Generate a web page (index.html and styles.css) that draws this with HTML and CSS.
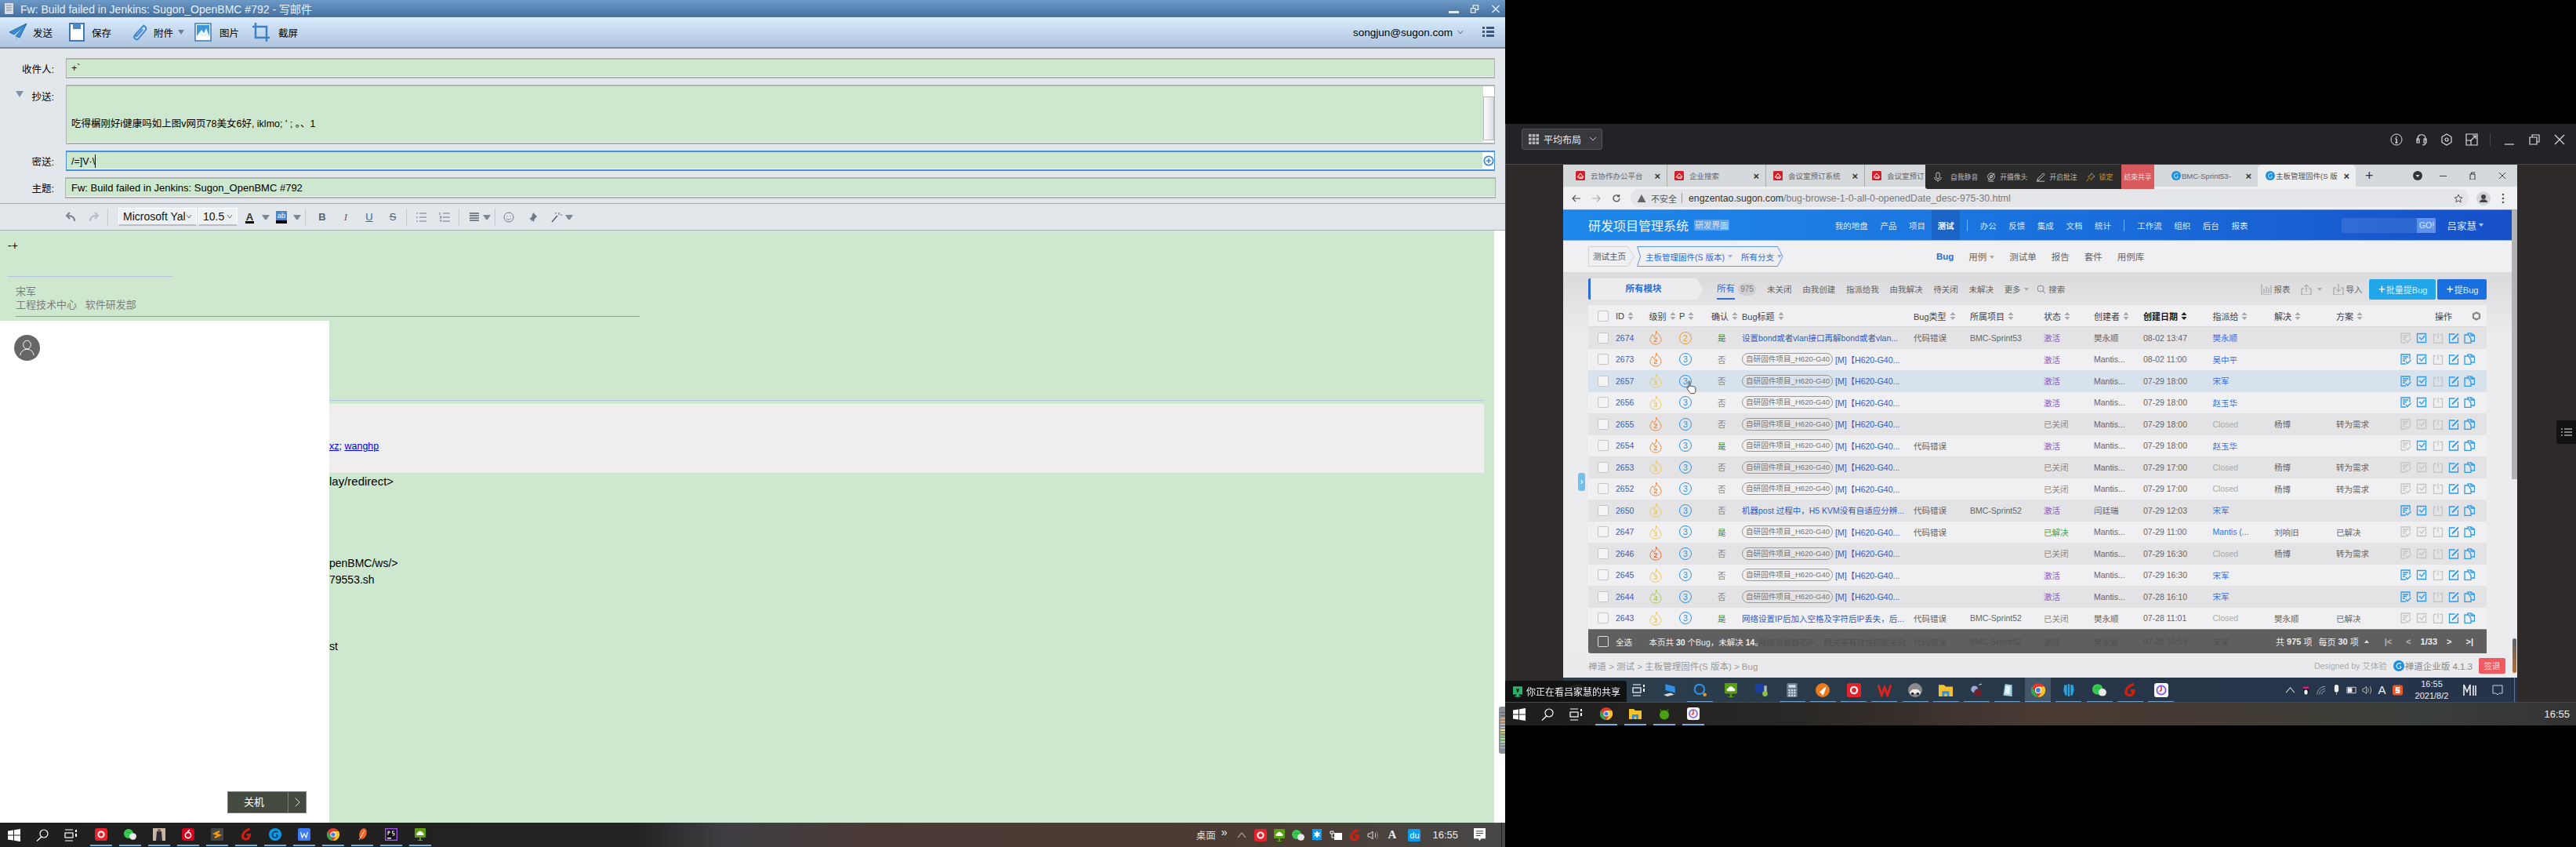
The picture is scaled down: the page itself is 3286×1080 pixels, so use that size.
FILE: index.html
```html
<!DOCTYPE html>
<html lang="zh-CN">
<head>
<meta charset="utf-8">
<title>Fw: Build failed in Jenkins: Sugon_OpenBMC #792</title>
<link rel="stylesheet" href="styles.css">
</head>
<body>
<svg class="sprite" aria-hidden="true">
  <symbol id="win" viewBox="0 0 16 16"><path fill="#fff" d="M0 2.6l7-1.1v6H0zM8 1.3L16 0v7.5H8zM0 8.5h7v6L0 13.4zM8 8.5h8V16l-8-1.3z"/></symbol>
  <symbol id="find" viewBox="0 0 16 16"><g fill="none" stroke="#fff" stroke-width="1.2"><circle cx="10" cy="6" r="5"/><path d="M6.8 10L1 15.5"/></g></symbol>
  <symbol id="task" viewBox="0 0 16 16"><g fill="none" stroke="#fff" stroke-width="1.2"><path d="M1 1h10M1 15h10"/><rect x="1" y="5" width="10" height="6"/></g><path fill="#fff" d="M14 1h2v3h-2zM14 6h2v4h-2z"/></symbol>
  <symbol id="ired" viewBox="0 0 16 16"><rect width="16" height="16" rx="3" fill="#e8212b"/><circle cx="8" cy="8" r="3.6" fill="none" stroke="#fff" stroke-width="2"/></symbol>
  <symbol id="iwx" viewBox="0 0 16 16"><ellipse cx="6" cy="7" rx="6" ry="6" fill="#37c94f"/><ellipse cx="11.5" cy="10.5" rx="4.5" ry="4.2" fill="#e8e8e8"/><path fill="#1d6f2a" d="M4 5h1v1H4zM7 5h1v1H7z"/></symbol>
  <symbol id="iphoto" viewBox="0 0 16 16"><rect width="16" height="16" fill="#c9b6a4"/><path fill="#2b2b36" d="M5 4h6l1 12H4z"/><circle cx="8" cy="3" r="2" fill="#7a5a4a"/></symbol>
  <symbol id="inet" viewBox="0 0 16 16"><rect width="16" height="16" rx="3" fill="#d8001c"/><circle cx="8" cy="9" r="3.6" fill="none" stroke="#fff" stroke-width="1.6"/><path d="M10 2L7 5" stroke="#fff" stroke-width="1.6"/></symbol>
  <symbol id="isub" viewBox="0 0 16 16"><rect width="16" height="16" rx="1" fill="#444"/><path d="M11 4L5 7l6 2-6 3" fill="none" stroke="#f59b0a" stroke-width="2.4"/></symbol>
  <symbol id="ig" viewBox="0 0 16 16"><path d="M12.5 1C7 3 3.500 6.500 3.500 10.500c0 3.500 5 4.500 7.500 2 1-1 1.500-3 1.500-4H8.500" fill="none" stroke="#d0200c" stroke-width="3"/></symbol>
  <symbol id="iswirl" viewBox="0 0 16 16"><circle cx="8" cy="8" r="8" fill="#0a9be8"/><path d="M11.500 5C9 3 4.500 5 4.500 8.500s4 4.500 6 2.500c.8-.8.8-2.500-1.500-2.500" fill="none" stroke="#0b2a55" stroke-width="1.500"/></symbol>
  <symbol id="iwps" viewBox="0 0 16 16"><rect width="16" height="16" rx="2" fill="#3b7bf5"/><path d="M3.500 5l2 7 2.500-5 2.500 5 2-7" fill="none" stroke="#fff" stroke-width="1.200"/></symbol>
  <symbol id="ichrome" viewBox="0 0 16 16"><circle cx="8" cy="8" r="8" fill="#e0392e"/><path fill="#2fa84f" d="M8 16A8 8 0 0 1 1 4l4 7z"/><path fill="#f7c325" d="M8 16a8 8 0 0 0 7-12H8l3 7z"/><circle cx="8" cy="8" r="3.600" fill="#fff"/><circle cx="8" cy="8" r="2.600" fill="#3a7ee8"/></symbol>
  <symbol id="ifeather" viewBox="0 0 16 16"><ellipse cx="9" cy="7" rx="4.500" ry="7" transform="rotate(18 9 7)" fill="#f0642a"/><path d="M11 3L4 15" stroke="#ddd" stroke-width="1"/></symbol>
  <symbol id="ips" viewBox="0 0 16 16"><rect x=".7" y=".7" width="14.600" height="14.600" fill="#111" stroke="#a050f0" stroke-width="1.400"/><path d="M4 4v5M4 4h2v2H4M12 4H9.500v2.500H12V9H9.500" fill="none" stroke="#eee"/><path d="M3 12h5v1.500H3z" fill="#fff"/></symbol>
  <symbol id="iboard" viewBox="0 0 16 16"><rect x="1" width="14" height="12" rx="1" fill="#58a00e"/><path fill="#fff" d="M4 9c-1.500-1-.5-3 1-3 .5-3 5.500-3 6 0 1.500 0 2.500 2 1 3z"/><path fill="#58a00e" d="M7 12h2v3h2v1H5v-1h2z"/></symbol>
  <symbol id="ifolder" viewBox="0 0 16 16"><path fill="#f5c02d" d="M0 2h6l2 2h8v11H0z"/><path fill="#2c8fe8" d="M4 9h8v6H9.500v-3h-3v3H4z"/></symbol>
  <symbol id="iclock" viewBox="0 0 16 16"><rect width="16" height="16" rx="3" fill="#f7f7fa"/><circle cx="8" cy="8" r="5" fill="none" stroke="#7b5be8" stroke-width="1.600"/><path d="M8 3.500V8l-2 1.500" fill="none" stroke="#e84a3a" stroke-width="1.600"/></symbol>
  <symbol id="imickey" viewBox="0 0 16 16"><circle cx="8" cy="9.500" r="6" fill="#4da012"/><path fill="#2c6a08" d="M2 1l4 3-3 2zM14 1l-4 3 3 2z"/></symbol>
  <symbol id="iqb" viewBox="0 0 16 16"><circle cx="7" cy="7" r="5.500" fill="none" stroke="#2997e8" stroke-width="1.800"/><circle cx="13" cy="13" r="2" fill="#e89a20"/></symbol>
  <symbol id="idesk" viewBox="0 0 16 16"><path fill="#2e8ee8" d="M3 1l11 3v7L3 8z"/><path fill="#d8d8d8" d="M1 13l8-2 4 2-8 2z"/></symbol>
  <symbol id="imon" viewBox="0 0 16 16"><rect x="1" y="1" width="10" height="10" fill="#1d3fa0"/><path fill="#bbb" d="M11 3h3v11h-3z"/><circle cx="12" cy="12" r="3" fill="#8cc04a"/></symbol>
  <symbol id="icalc" viewBox="0 0 16 16"><rect x="2" width="12" height="16" rx="1" fill="#6a7a88"/><path fill="#cfe0ee" d="M4 2h8v3H4zM4 7h2v2H4zM7 7h2v2H7zM10 7h2v2h-2zM4 10h2v2H4zM7 10h2v2H7zM10 10h2v2h-2zM4 13h2v2H4zM7 13h2v2H7zM10 13h2v2h-2z"/></symbol>
  <symbol id="ifox" viewBox="0 0 16 16"><circle cx="8" cy="8" r="8" fill="#ea7a1c"/><path fill="#fff" d="M4 10c3-1 4-4 8-6-1 4-2 8-4 10-1-2-2-3-4-4z"/></symbol>
  <symbol id="iw" viewBox="0 0 16 16"><path d="M1 2l3.500 12L8 5l3.500 9L15 2" fill="none" stroke="#d8241c" stroke-width="2.600"/></symbol>
  <symbol id="icar" viewBox="0 0 16 16"><circle cx="8" cy="8" r="8" fill="#8b8b8b"/><path fill="#eee" d="M2 10l3-3h6l3 3v2H2z"/><circle cx="5" cy="12" r="1.500" fill="#222"/><circle cx="11" cy="12" r="1.500" fill="#222"/></symbol>
  <symbol id="ibug" viewBox="0 0 16 16"><circle cx="6" cy="7" r="4" fill="#9aa8d8"/><circle cx="10" cy="11" r="4.500" fill="#6a1f2a"/><path d="M11 2l3-1" stroke="#ccc"/></symbol>
  <symbol id="ibook" viewBox="0 0 16 16"><path fill="#9fd0dc" d="M5 1l8 1v13l-10-1z"/><path fill="#e8f3f5" d="M6 3l5 .5-1 9-5-.5z"/></symbol>
  <symbol id="ippl" viewBox="0 0 16 16"><path fill="#27a3e0" d="M3 2h3v12H4l-2-6zM7 1h2v14H7zM10 2h3l1 6-2 6h-2z"/></symbol>
  <symbol id="flame" viewBox="0 0 16 19"><path fill="none" stroke="currentColor" stroke-width="1" d="M8.500 1C9 4 14.500 6.500 15 11.500 15.300 15.500 12 18 8 18S.7 15.500 1 11.500C1.200 9 3.200 7.500 3.800 5.500 5 6.500 5.500 7.500 5.800 8.500 7.500 7 9 4.500 8.500 1z"/></symbol>
  <symbol id="oL" viewBox="0 0 14 14"><g fill="none" stroke="currentColor" stroke-width="1.300"><path d="M7 13H1V1h11v6M3 4h7M3 6.500h5M3 9h3"/><path d="M7 10l2 2.500L13.500 8"/></g></symbol>
  <symbol id="oC" viewBox="0 0 14 14"><g fill="none" stroke="currentColor" stroke-width="1.300"><path d="M12.500 1.500h-11v11h11z"/><path d="M4 6l3 3 4-5"/></g></symbol>
  <symbol id="oP" viewBox="0 0 14 14"><g fill="none" stroke="currentColor" stroke-width="1.300"><path d="M4.500 2.500h-3v11h11v-11h-3M7 .5v7"/></g></symbol>
  <symbol id="oE" viewBox="0 0 14 14"><g fill="none" stroke="currentColor" stroke-width="1.300"><path d="M12.500 6v7h-11V2h7"/><path d="M5 9.500L13 1.500" stroke-width="1.800"/></g></symbol>
  <symbol id="oY" viewBox="0 0 14 14"><g fill="none" stroke="currentColor" stroke-width="1.300"><path d="M6 3H1v10.500h8V8z"/><path d="M5 3V.8h4l4.500 3v7.200H9M9 1v3h4"/></g></symbol>
  <symbol id="sort" viewBox="0 0 8 12"><path fill="currentColor" d="M4 1l3.500 4h-7zM4 11L.5 7h7z"/></symbol>
  <symbol id="tablogo" viewBox="0 0 12 12"><rect width="12" height="12" rx="1.500" fill="#cf1f28"/><path d="M2 8l4-5 4 5zM4 9.500h5" fill="none" stroke="#fff"/></symbol>
  <symbol id="zlogo" viewBox="0 0 12 12"><circle cx="6" cy="6" r="6" fill="#1c8fe0"/><path d="M8.500 3.800C7 2.300 3.500 3.500 3.500 6.300s3 3.300 4.500 2c.6-.6.600-1.800-1-1.800" fill="none" stroke="#fff" stroke-width="1"/></symbol>
</svg>

<main class="screen">
  <section class="mon-left">
    <div class="mail">
      <header class="titlebar">
        <svg class="doc-ic" viewBox="0 0 11 14"><path fill="#d8dde4" d="M0 0h11v14H0z"/><path stroke="#7d8fa5" d="M2 3h7M2 6h7M2 9h7"/></svg>
        <span class="title-text">Fw: Build failed in Jenkins: Sugon_OpenBMC #792 - 写邮件</span>
        <div class="winctl">
          <i class="wc-min"></i>
          <svg class="wc-res" viewBox="0 0 12 12"><path fill="none" stroke="#dfe9f4" stroke-width="1.500" d="M1 5h6v6H1zM4 5V1h7v6H7"/></svg>
          <svg class="wc-x" viewBox="0 0 12 12"><path stroke="#dfe9f4" stroke-width="1.600" d="M1 1l10 10M11 1L1 11"/></svg>
        </div>
      </header>
      <nav class="mailbar">
        <button class="mb mb-send"><svg viewBox="0 0 24 24"><path fill="#3c8dd6" stroke="#1f6aa8" d="M23 1L1 12l6 3L23 1zM23 1L9 17l5 2z"/><path fill="#9cc6ea" d="M9 17v7l3-5z"/></svg>发送</button>
        <button class="mb mb-save"><svg viewBox="0 0 20 24"><path fill="#fff" stroke="#3f78b4" stroke-width="2" d="M1 1h18v22H1z"/><path fill="#4f88c4" d="M5 1h10v7H5z"/></svg>保存</button>
        <button class="mb mb-att"><svg viewBox="0 0 22 26"><path fill="none" stroke="#3f84cc" stroke-width="2" d="M18 3L5 17c-3 4 2 8 5 5L20 10c2-4-2-7-5-4L6 16c-1 2 1 3 2 2l8-9"/></svg>附件<i class="tri"></i></button>
        <button class="mb mb-pic"><svg viewBox="0 0 22 24"><path fill="#fff" stroke="#3f78b4" stroke-width="1.500" d="M1 1h20v22H1z"/><path fill="#3f97d8" d="M3 3h16v14H3z"/><path fill="#e8f4fb" d="M3 17l6-8 3 4 3-6 4 10z"/></svg>图片</button>
        <button class="mb mb-crop"><svg viewBox="0 0 22 24"><path fill="none" stroke="#3f7fc4" stroke-width="2.500" d="M4 0v19h18M0 5h18v19"/></svg>截屏</button>
        <div class="account">songjun@sugon.com<svg class="acc-c" viewBox="0 0 8 6"><path fill="none" stroke="#667" d="M1 1l3 4 3-4"/></svg>
          <svg class="acc-l" viewBox="0 0 15 14"><path fill="#3a5878" d="M0 0h3v3H0zM5 0h10v3H5zM0 5h3v3H0zM5 5h10v3H5zM0 10h3v3H0zM5 10h10v3H5z"/></svg>
        </div>
      </nav>
      <form class="fields">
        <label class="flabel">收件人:</label><div class="fbox fb-to">+`</div>
        <label class="flabel"><i class="cc-tri"></i>抄送:</label>
        <div class="fbox fb-cc"><span class="cc-text">吃得榍刚好i健康吗如上图v网页78美女6好, iklmo; ' ; 。、1</span><div class="cc-scroll"><i class="cc-thumb"></i></div></div>
        <label class="flabel">密送:</label>
        <div class="fbox fb-bcc"><span>/=]V·\<i class="caret"></i></span><span class="plus"><svg viewBox="0 0 16 16"><circle cx="8" cy="8" r="6.500" fill="none" stroke="#3b86d8" stroke-width="2"/><path stroke="#3b86d8" stroke-width="1.800" d="M8 4.500v7M4.500 8h7"/></svg></span></div>
        <label class="flabel">主题:</label><div class="fbox fb-sub">Fw: Build failed in Jenkins: Sugon_OpenBMC #792</div>
      </form>
      <div class="fmt">
        <span class="fi"><svg viewBox="0 0 14 14"><path fill="none" stroke="#7a8288" stroke-width="2" d="M12 12C12 7 9 5 4 5M6 1L2 5l4 4"/></svg></span>
        <span class="fi"><svg viewBox="0 0 14 14"><path fill="none" stroke="#b5bbc0" stroke-width="2" d="M2 12C2 7 5 5 10 5M8 1l4 4-4 4"/></svg></span>
        <i class="fs"></i>
        <span class="fsel fsel-font">Microsoft Yal<svg viewBox="0 0 8 6"><path fill="none" stroke="#667" d="M1 1l3 4 3-4"/></svg></span>
        <span class="fsel fsel-size">10.5<svg viewBox="0 0 8 6"><path fill="none" stroke="#667" d="M1 1l3 4 3-4"/></svg></span>
        <span class="fi m5 fa-a">A</span><span class="fa"></span>
        <span class="fi m2 fa-ab">ab</span><span class="fa"></span>
        <i class="fs m3"></i>
        <span class="fi m3 ft-b">B</span><span class="fi ft-i">I</span><span class="fi ft-u">U</span><span class="fi ft-s">S</span>
        <i class="fs"></i>
        <span class="fi"><svg viewBox="0 0 14 14"><path stroke="#6c7a86" d="M5 2h9M5 7h9M5 12h9M1 2h2M1 7h2M1 12h2"/></svg></span>
        <span class="fi"><svg viewBox="0 0 14 14"><path fill="none" stroke="#6c7a86" d="M5 2h9M5 7h9M5 12h9M1 1v3M1 6h2v2H1M1 11h2v2"/></svg></span>
        <i class="fs m1"></i>
        <span class="fi m1"><svg viewBox="0 0 14 14"><path stroke="#56636e" stroke-width="1.400" d="M1 2h12M1 5h12M1 8h12M1 11h12"/></svg></span><span class="fa mn4"></span>
        <i class="fs m3"></i>
        <span class="fi mn1"><svg viewBox="0 0 14 14"><g fill="none" stroke="#6c7a86"><circle cx="7" cy="7" r="6"/><path d="M4 8.500c1.500 2 4.500 2 6 0M5 5v1M9 5v1"/></g></svg></span>
        <span class="fi"><svg viewBox="0 0 14 14"><path fill="#6c7a86" d="M8 1l5 5-3 3-1 4-2-2-2 2 1-3-3-1 3-2z"/></svg></span>
        <span class="fi m1"><svg viewBox="0 0 14 14"><path stroke="#56636e" stroke-width="1.600" d="M1 13L8 5"/><path stroke="#56636e" d="M10 1v3M12 4h2M6 1v2"/></svg></span><span class="fa mn4"></span>
      </div>
      <div class="compose">
        <div class="compose-main">
          <p class="cm-plus">-+</p>
          <hr class="cm-hr1">
          <p class="cm-sig">宋军<br>工程技术中心&nbsp;&nbsp;&nbsp;软件研发部</p>
          <hr class="cm-hr2">
          <hr class="cm-hr3">
          <div class="cm-quote"><a href="#">xz</a>; <a href="#">wanghp</a></div>
          <p class="cm-l1">lay/redirect&gt;</p>
          <p class="cm-l2">penBMC/ws/&gt;</p>
          <p class="cm-l3">79553.sh</p>
          <p class="cm-l4">st</p>
        </div>
        <div class="compose-scroll"><div class="thumb-map"><i class="tk a"></i><i class="tk a"></i><i class="tk b"></i><i class="tk b"></i><i class="tk c"></i><i class="tk c"></i><i class="tk c"></i><i class="tk c"></i><i class="tk d"></i><i class="tk d"></i><i class="tk d"></i><i class="tk e"></i><i class="tk e"></i></div></div>
      </div>
      <aside class="startmenu">
        <svg class="avatar" viewBox="0 0 34 34"><circle cx="17" cy="17" r="17" fill="#666"/><g fill="none" stroke="#fff"><ellipse cx="17" cy="13" rx="5" ry="5.500"/><path d="M8 27c1-6 5-8 9-8s8 2 9 8"/></g></svg>
        <div class="power"><span class="power-l">关机</span><span class="power-r"><svg viewBox="0 0 8 14"><path fill="none" stroke="#fff" d="M1 1l6 6-6 6"/></svg></span></div>
      </aside>
    </div>
    <footer class="taskbar">
      <span class="tb-sys"><svg><use href="#win"/></svg></span>
      <span class="tb-sys"><svg><use href="#find"/></svg></span>
      <span class="tb-sys"><svg><use href="#task"/></svg></span>
      <div class="tb-apps">
        <span class="app"><svg><use href="#ired"/></svg></span><span class="app"><svg><use href="#iwx"/></svg></span><span class="app"><svg><use href="#iphoto"/></svg></span><span class="app"><svg><use href="#inet"/></svg></span><span class="app"><svg><use href="#isub"/></svg></span><span class="app"><svg><use href="#ig"/></svg></span><span class="app"><svg><use href="#iswirl"/></svg></span><span class="app"><svg><use href="#iwps"/></svg></span><span class="app"><svg><use href="#ichrome"/></svg></span><span class="app"><svg><use href="#ifeather"/></svg></span><span class="app"><svg><use href="#ips"/></svg></span><span class="app"><svg><use href="#iboard"/></svg></span>
      </div>
      <div class="tray">
        <span class="tr-desk">桌面</span><span class="tr-more">»</span>
        <svg class="tr-up" viewBox="0 0 12 8"><path fill="none" stroke="#ddd" d="M1 7l5-6 5 6"/></svg>
        <svg class="tr-i"><use href="#ired"/></svg><svg class="tr-i"><use href="#iboard"/></svg><svg class="tr-i"><use href="#iwx"/></svg>
        <svg class="tr-i" viewBox="0 0 16 16"><path fill="#0a9bf0" d="M2 0h12v14H9l-1 2-1-2H2z"/><path stroke="#fff" stroke-width="2" d="M8 3v8M4.500 5l7 4M11.500 5l-7 4"/></svg>
        <svg class="tr-i" viewBox="0 0 16 16"><path fill="#fff" d="M6 5h10v9H6z"/><path fill="none" stroke="#fff" d="M1 6V3h4v3zM3 6v5h3"/></svg>
        <svg class="tr-i"><use href="#ig"/></svg>
        <svg class="tr-i" viewBox="0 0 16 16"><g fill="none" stroke="#ddd"><path d="M1 6h3l3-3v10l-3-3H1zM10 5c1 2 1 4 0 6"/><path stroke="#888" d="M12 3c2 3 2 7 0 10"/></g></svg>
        <span class="tr-a">A</span>
        <span class="tr-du">du</span>
        <span class="tr-time">16:55</span>
        <svg class="tr-note" viewBox="0 0 16 18"><path fill="#fff" d="M0 0h16v14H10l-2 3-2-3H0z"/><path stroke="#333" d="M3 4h10M3 7h10M3 10h6"/></svg>
        <i class="tr-edge"></i>
      </div>
    </footer>
  </section>

  <section class="mon-right">
    <div class="conf">
      <header class="conf-head">
        <button class="layout-btn"><svg viewBox="0 0 13 13"><path fill="#b8b8ba" d="M0 0h3.500v3.500H0zM4.700 0h3.600v3.500H4.700zM9.500 0H13v3.500H9.500zM0 4.700h3.500v3.600H0zM4.700 4.700h3.600v3.600H4.700zM9.500 4.700H13v3.600H9.500zM0 9.500h3.500V13H0zM4.700 9.500h3.600V13H4.700zM9.500 9.500H13V13H9.500z"/></svg>平均布局<svg class="lb-c" viewBox="0 0 10 6"><path fill="none" stroke="#bbb" d="M1 1l4 4 4-4"/></svg></button>
        <div class="conf-ctl">
          <svg viewBox="0 0 16 16"><g fill="none" stroke="#ddd"><circle cx="8" cy="8" r="7"/><path stroke-width="1.500" d="M8 7v5M6.500 12h3M6.500 7H8M8 4v1.500"/></g></svg>
          <svg viewBox="0 0 16 16"><g fill="none" stroke="#ddd" stroke-width="1.200"><path d="M3 10V7c0-7 10-7 10 0v3"/><path d="M2 7h3v5H2zM11 7h3v5h-3zM13 12c0 2-2 3-4 3"/></g></svg>
          <svg viewBox="0 0 16 16"><g fill="none" stroke="#ddd" stroke-width="1.200"><path d="M8 1l6 3.500v7L8 15l-6-3.500v-7z"/><circle cx="8" cy="8" r="2"/></g></svg>
          <svg viewBox="0 0 16 16"><g fill="none" stroke="#ddd" stroke-width="1.200"><path d="M1 1h14v14H1zM1 9h6v6M6 10l7-7M9 3h4v4"/></g></svg>
          <i class="cc-sep"></i>
          <svg viewBox="0 0 16 16"><path stroke="#ddd" stroke-width="1.200" d="M2 14h12"/></svg>
          <svg viewBox="0 0 16 16"><path fill="none" stroke="#ddd" stroke-width="1.200" d="M2 5h9v9H2zM5 5V2h9v9h-3"/></svg>
          <svg viewBox="0 0 16 16"><path stroke="#ddd" stroke-width="1.200" d="M2 2l12 12M14 2L2 14"/></svg>
        </div>
      </header>
      <div class="stage">
        <div class="remote">
          <div class="tabs">
            <div class="tab"><svg class="fav"><use href="#tablogo"/></svg><span class="tab-t">云协作办公平台</span><b>×</b></div>
            <div class="tab"><svg class="fav"><use href="#tablogo"/></svg><span class="tab-t">企业搜索</span><b>×</b></div>
            <div class="tab"><svg class="fav"><use href="#tablogo"/></svg><span class="tab-t">会议室预订系统</span><b>×</b></div>
            <div class="tab"><svg class="fav"><use href="#tablogo"/></svg><span class="tab-t">会议室预订</span></div>
            <div class="tab-gap"></div>
            <div class="tab tab-bmc"><svg class="fav"><use href="#zlogo"/></svg><span class="tab-t">BMC-Sprint53-</span><b>×</b></div>
            <div class="tab tab-on"><svg class="fav"><use href="#zlogo"/></svg><span class="tab-t">主板管理固件(S 版</span><b>×</b></div>
            <span class="tab-plus">+</span>
            <svg class="tab-dl" viewBox="0 0 12 12"><circle cx="6" cy="6" r="6" fill="#333"/><path fill="#ddd" d="M3.500 5h5L6 8z"/></svg>
            <div class="tab-win"><i class="tw-min"></i><svg viewBox="0 0 10 10"><path fill="none" stroke="#333" d="M2 3h6v7H2zM3.500 3V1h5"/></svg><svg viewBox="0 0 10 10"><path stroke="#444" d="M1 1l8 8M9 1L1 9"/></svg></div>
          </div>
          <div class="sharebar">
            <svg class="sb-i sb-mic" viewBox="0 0 12 16"><g fill="none" stroke="#ddd"><rect x="3.500" y="1" width="5" height="9" rx="2.500"/><path d="M1 8c0 6 10 6 10 0M6 13v2"/></g></svg><span class="sb-t">自我静音</span>
            <svg class="sb-i" viewBox="0 0 14 14"><g fill="none" stroke="#ddd"><circle cx="7" cy="6" r="5"/><circle cx="7" cy="6" r="2"/><path d="M3 13h8M12 1L2 12"/></g></svg><span class="sb-t">开摄像头</span>
            <svg class="sb-i" viewBox="0 0 14 14"><path fill="none" stroke="#ddd" d="M11 1l2 2-8 8-3 1 1-3zM1 13h12"/></svg><span class="sb-t">开启批注</span>
            <svg class="sb-i" viewBox="0 0 14 14"><path fill="none" stroke="#d9a03a" d="M8 1l5 5-3 1-2 4-5-5 4-2zM4 9l-3 4"/></svg><span class="sb-t sb-lock">锁定</span>
            <span class="sb-end">结束共享</span>
          </div>
          <div class="addr">
            <svg class="ad-b" viewBox="0 0 12 12"><path fill="none" stroke="#555" stroke-width="1.200" d="M11 6H1M5 2L1 6l4 4"/></svg>
            <svg class="ad-b ad-f" viewBox="0 0 12 12"><path fill="none" stroke="#aaa" stroke-width="1.200" d="M1 6h10M7 2l4 4-4 4"/></svg>
            <svg class="ad-b ad-r" viewBox="0 0 12 12"><path fill="none" stroke="#555" stroke-width="1.400" d="M10 6a4 4 0 1 1-1.200-3M9.500 1v2.500H7"/></svg>
            <div class="omni">
              <svg class="warn" viewBox="0 0 12 12"><path fill="#666" d="M6 1l5.500 10H.5z"/></svg>
              <span class="insec">不安全</span><i class="om-sep"></i>
              <span class="url"><b>engzentao.sugon.com</b>/bug-browse-1-0-all-0-openedDate_desc-975-30.html</span>
              <svg class="star" viewBox="0 0 12 12"><path fill="none" stroke="#555" d="M6 1l1.500 3.500 3.500.4-2.600 2.300.8 3.800L6 8.800 2.800 10.700l.8-3.800L1 4.900l3.500-.4z"/></svg>
            </div>
            <svg class="prof" viewBox="0 0 18 18"><circle cx="9" cy="9" r="9" fill="#d2d5da"/><circle cx="9" cy="7" r="3" fill="#444"/><path fill="#444" d="M4 14c0-5 10-5 10 0z"/></svg>
            <svg class="dots" viewBox="0 0 4 14"><circle cx="2" cy="2" r="1.300" fill="#555"/><circle cx="2" cy="7" r="1.300" fill="#555"/><circle cx="2" cy="12" r="1.300" fill="#555"/></svg>
          </div>
          <div class="appwrap">
            <div class="app-main">
              <header class="zh">
                <span class="zh-title">研发项目管理系统</span><span class="zh-badge">研发界面</span>
                <nav class="zh-nav">
                  <a>我的地盘</a><a>产品</a><a>项目</a><a class="on">测试</a><i></i><a>办公</a><a>反馈</a><a>集成</a><a>文档</a><a>统计</a><i></i><a>工作流</a><a>组织</a><a>后台</a><a>报表</a>
                </nav>
                <div class="zh-search"><span>GO!</span></div>
                <span class="zh-user">吕家慧<i></i></span>
              </header>
              <div class="sub">
                <span class="crumb">测试主页<svg viewBox="0 0 59 26" preserveAspectRatio="none"><path fill="none" stroke="#d2d2d4" d="M.5.500h50l8 12.500-8 12.500H.5z"/></svg></span>
                <span class="prod"><em>主板管理固件(S 版本)</em><i class="cr"></i><em class="p2nd">所有分支</em><i class="cr"></i><svg viewBox="0 0 187 26" preserveAspectRatio="none"><path fill="none" stroke="#5b97e8" d="M.5.500h179l6.500 12.500-6.500 12.500H.5l4-12.500z"/></svg></span>
                <nav class="sub-nav">
                  <a class="on">Bug</a><a>用例<i class="cr g"></i></a><a>测试单</a><a>报告</a><a>套件</a><a>用例库</a>
                </nav>
              </div>
              <div class="work">
                <div class="filter">
                  <span class="allmod">所有模块</span>
                  <a class="fl-on">所有</a><span class="fl-count">975</span>
                  <div class="fl-list"><a>未关闭</a><a>由我创建</a><a>指派给我</a><a>由我解决</a><a>待关闭</a><a>未解决</a><a>更多<i class="cr g"></i></a><a class="fl-search"><svg viewBox="0 0 12 12"><g fill="none" stroke="#888"><circle cx="5" cy="5" r="4"/><path d="M8 8l3 3"/></g></svg>搜索</a></div>
                  <div class="fl-right">
                    <a><svg viewBox="0 0 14 14"><path fill="none" stroke="#999" d="M1 0v14h13M4 6v6M7 3v9M10 5v7M13 2v10"/></svg>报表</a>
                    <a class="fl-exp"><svg viewBox="0 0 14 14"><path fill="none" stroke="#999" d="M4 6H1v8h12V6h-3M7 10V1M4 4l3-3 3 3"/></svg><i class="cr g"></i></a>
                    <a class="fl-imp"><svg viewBox="0 0 14 14"><path fill="none" stroke="#999" d="M4 5H1v9h12V5h-3M7 0v10M4 7l3 3 3-3"/></svg>导入</a>
                    <span class="btn btn-a"><b>+</b>批量提Bug</span><span class="btn btn-b"><b>+</b>提Bug</span>
                  </div>
                </div>
                <div class="tbl">
                  <div class="row head"><span class="cb"></span><span>ID<svg class="s"><use href="#sort"/></svg></span><span>级别<svg class="s"><use href="#sort"/></svg></span><span>P<svg class="s"><use href="#sort"/></svg></span><span>确认<svg class="s"><use href="#sort"/></svg></span><span>Bug标题<svg class="s"><use href="#sort"/></svg></span><span>Bug类型<svg class="s"><use href="#sort"/></svg></span><span>所属项目<svg class="s"><use href="#sort"/></svg></span><span>状态<svg class="s"><use href="#sort"/></svg></span><span>创建者<svg class="s"><use href="#sort"/></svg></span><span class="hd-on">创建日期<svg class="s"><use href="#sort"/></svg></span><span>指派给<svg class="s"><use href="#sort"/></svg></span><span>解决<svg class="s"><use href="#sort"/></svg></span><span>方案<svg class="s"><use href="#sort"/></svg></span><span class="hd-op">操作<svg viewBox="0 0 12 12"><path fill="none" stroke="#888" stroke-width="2.200" d="M6 1.500l4 2.200v4.600l-4 2.200-4-2.200V3.700z"/></svg></span></div>

                  <div class="row alt"><span class="cb"></span><a class="id">2674</a><svg class="fl o"><use href="#flame"/><text x="8" y="14.500">2</text></svg><span class="pri po">2</span><span class="yes">是</span><a class="ttl">设置bond或者vlan接口再解bond或者vlan...</a><span>代码错误</span><span>BMC-Sprint53</span><span class="act">激活</span><span>樊永顺</span><span>08-02 13:47</span><a class="asg">樊永顺</a><span></span><span></span><span class="ops"><svg class="off"><use href="#oL"/></svg><svg><use href="#oC"/></svg><svg class="off"><use href="#oP"/></svg><svg><use href="#oE"/></svg><svg><use href="#oY"/></svg></span></div>

                  <div class="row"><span class="cb"></span><a class="id">2673</a><svg class="fl o"><use href="#flame"/><text x="8" y="14.500">2</text></svg><span class="pri">3</span><span class="no">否</span><span class="ttl"><em class="tag">自研固件项目_H620-G40</em><a>[M]【H620-G40...</a></span><span></span><span></span><span class="act">激活</span><span>Mantis...</span><span>08-02 11:00</span><a class="asg">吴中平</a><span></span><span></span><span class="ops"><svg><use href="#oL"/></svg><svg><use href="#oC"/></svg><svg class="off"><use href="#oP"/></svg><svg><use href="#oE"/></svg><svg><use href="#oY"/></svg></span></div>

                  <div class="row hov"><span class="cb"></span><a class="id">2657</a><svg class="fl y"><use href="#flame"/><text x="8" y="14.500">3</text></svg><span class="pri">3<svg class="hand" viewBox="0 0 14 20"><path fill="#fff" stroke="#333" d="M3 1.500c1-1 2 0 2 1v6c0-1 2-1 2 0 0-1 2-1 2 .500 0-1 2-1 2 .500 1-.5 2 0 2 1v4c0 2-1 4-2 4H6c-1-1-4-5-5-7s1-2 2-1z"/></svg></span><span class="no">否</span><span class="ttl"><em class="tag">自研固件项目_H620-G40</em><a>[M]【H620-G40...</a></span><span></span><span></span><span class="act">激活</span><span>Mantis...</span><span>07-29 18:00</span><a class="asg">宋军</a><span></span><span></span><span class="ops"><svg><use href="#oL"/></svg><svg><use href="#oC"/></svg><svg class="off"><use href="#oP"/></svg><svg><use href="#oE"/></svg><svg><use href="#oY"/></svg></span></div>

                  <div class="row"><span class="cb"></span><a class="id">2656</a><svg class="fl y"><use href="#flame"/><text x="8" y="14.500">3</text></svg><span class="pri">3</span><span class="no">否</span><span class="ttl"><em class="tag">自研固件项目_H620-G40</em><a>[M]【H620-G40...</a></span><span></span><span></span><span class="act">激活</span><span>Mantis...</span><span>07-29 18:00</span><a class="asg">赵玉华</a><span></span><span></span><span class="ops"><svg><use href="#oL"/></svg><svg><use href="#oC"/></svg><svg class="off"><use href="#oP"/></svg><svg><use href="#oE"/></svg><svg><use href="#oY"/></svg></span></div>

                  <div class="row alt"><span class="cb"></span><a class="id">2655</a><svg class="fl o"><use href="#flame"/><text x="8" y="14.500">2</text></svg><span class="pri">3</span><span class="no">否</span><span class="ttl"><em class="tag">自研固件项目_H620-G40</em><a>[M]【H620-G40...</a></span><span></span><span></span><span class="cls">已关闭</span><span>Mantis...</span><span>07-29 18:00</span><span class="cld">Closed</span><span>杨博</span><span>转为需求</span><span class="ops"><svg class="off"><use href="#oL"/></svg><svg class="off"><use href="#oC"/></svg><svg class="off"><use href="#oP"/></svg><svg><use href="#oE"/></svg><svg><use href="#oY"/></svg></span></div>

                  <div class="row"><span class="cb"></span><a class="id">2654</a><svg class="fl o"><use href="#flame"/><text x="8" y="14.500">2</text></svg><span class="pri">3</span><span class="yes">是</span><span class="ttl"><em class="tag">自研固件项目_H620-G40</em><a>[M]【H620-G40...</a></span><span>代码错误</span><span></span><span class="act">激活</span><span>Mantis...</span><span>07-29 18:00</span><a class="asg">赵玉华</a><span></span><span></span><span class="ops"><svg class="off"><use href="#oL"/></svg><svg><use href="#oC"/></svg><svg class="off"><use href="#oP"/></svg><svg><use href="#oE"/></svg><svg><use href="#oY"/></svg></span></div>

                  <div class="row alt"><span class="cb"></span><a class="id">2653</a><svg class="fl y"><use href="#flame"/><text x="8" y="14.500">3</text></svg><span class="pri">3</span><span class="no">否</span><span class="ttl"><em class="tag">自研固件项目_H620-G40</em><a>[M]【H620-G40...</a></span><span></span><span></span><span class="cls">已关闭</span><span>Mantis...</span><span>07-29 17:00</span><span class="cld">Closed</span><span>杨博</span><span>转为需求</span><span class="ops"><svg class="off"><use href="#oL"/></svg><svg class="off"><use href="#oC"/></svg><svg class="off"><use href="#oP"/></svg><svg><use href="#oE"/></svg><svg><use href="#oY"/></svg></span></div>

                  <div class="row"><span class="cb"></span><a class="id">2652</a><svg class="fl o"><use href="#flame"/><text x="8" y="14.500">2</text></svg><span class="pri">3</span><span class="no">否</span><span class="ttl"><em class="tag">自研固件项目_H620-G40</em><a>[M]【H620-G40...</a></span><span></span><span></span><span class="cls">已关闭</span><span>Mantis...</span><span>07-29 17:00</span><span class="cld">Closed</span><span>杨博</span><span>转为需求</span><span class="ops"><svg class="off"><use href="#oL"/></svg><svg class="off"><use href="#oC"/></svg><svg class="off"><use href="#oP"/></svg><svg><use href="#oE"/></svg><svg><use href="#oY"/></svg></span></div>

                  <div class="row alt"><span class="cb"></span><a class="id">2650</a><svg class="fl y"><use href="#flame"/><text x="8" y="14.500">3</text></svg><span class="pri">3</span><span class="no">否</span><a class="ttl">机器post 过程中，H5 KVM没有自适应分辨...</a><span>代码错误</span><span>BMC-Sprint52</span><span class="act">激活</span><span>闫廷瑞</span><span>07-29 12:03</span><a class="asg">宋军</a><span></span><span></span><span class="ops"><svg><use href="#oL"/></svg><svg><use href="#oC"/></svg><svg class="off"><use href="#oP"/></svg><svg><use href="#oE"/></svg><svg><use href="#oY"/></svg></span></div>

                  <div class="row"><span class="cb"></span><a class="id">2647</a><svg class="fl y"><use href="#flame"/><text x="8" y="14.500">3</text></svg><span class="pri">3</span><span class="yes">是</span><span class="ttl"><em class="tag">自研固件项目_H620-G40</em><a>[M]【H620-G40...</a></span><span>代码错误</span><span></span><span class="done">已解决</span><span>Mantis...</span><span>07-29 11:00</span><a class="asg">Mantis (...</a><span>刘响旧</span><span>已解决</span><span class="ops"><svg class="off"><use href="#oL"/></svg><svg class="off"><use href="#oC"/></svg><svg class="off"><use href="#oP"/></svg><svg><use href="#oE"/></svg><svg><use href="#oY"/></svg></span></div>

                  <div class="row alt"><span class="cb"></span><a class="id">2646</a><svg class="fl r"><use href="#flame"/><text x="8" y="14.500">2</text></svg><span class="pri">3</span><span class="no">否</span><span class="ttl"><em class="tag">自研固件项目_H620-G40</em><a>[M]【H620-G40...</a></span><span></span><span></span><span class="cls">已关闭</span><span>Mantis...</span><span>07-29 16:30</span><span class="cld">Closed</span><span>杨博</span><span>转为需求</span><span class="ops"><svg class="off"><use href="#oL"/></svg><svg class="off"><use href="#oC"/></svg><svg class="off"><use href="#oP"/></svg><svg><use href="#oE"/></svg><svg><use href="#oY"/></svg></span></div>

                  <div class="row"><span class="cb"></span><a class="id">2645</a><svg class="fl y"><use href="#flame"/><text x="8" y="14.500">3</text></svg><span class="pri">3</span><span class="no">否</span><span class="ttl"><em class="tag">自研固件项目_H620-G40</em><a>[M]【H620-G40...</a></span><span></span><span></span><span class="act">激活</span><span>Mantis...</span><span>07-29 16:30</span><a class="asg">宋军</a><span></span><span></span><span class="ops"><svg><use href="#oL"/></svg><svg><use href="#oC"/></svg><svg class="off"><use href="#oP"/></svg><svg><use href="#oE"/></svg><svg><use href="#oY"/></svg></span></div>

                  <div class="row alt"><span class="cb"></span><a class="id">2644</a><svg class="fl g"><use href="#flame"/><text x="8" y="14.500">4</text></svg><span class="pri">3</span><span class="no">否</span><span class="ttl"><em class="tag">自研固件项目_H620-G40</em><a>[M]【H620-G40...</a></span><span></span><span></span><span class="act">激活</span><span>Mantis...</span><span>07-28 16:10</span><a class="asg">宋军</a><span></span><span></span><span class="ops"><svg><use href="#oL"/></svg><svg><use href="#oC"/></svg><svg class="off"><use href="#oP"/></svg><svg><use href="#oE"/></svg><svg><use href="#oY"/></svg></span></div>

                  <div class="row"><span class="cb"></span><a class="id">2643</a><svg class="fl y"><use href="#flame"/><text x="8" y="14.500">3</text></svg><span class="pri">3</span><span class="yes">是</span><a class="ttl">网络设置IP后加入空格及字符后IP丢失，后...</a><span>代码错误</span><span>BMC-Sprint52</span><span class="cls">已关闭</span><span>樊永顺</span><span>07-28 11:01</span><span class="cld">Closed</span><span>樊永顺</span><span>已解决</span><span class="ops"><svg class="off"><use href="#oL"/></svg><svg class="off"><use href="#oC"/></svg><svg class="off"><use href="#oP"/></svg><svg><use href="#oE"/></svg><svg><use href="#oY"/></svg></span></div>

                  <div class="row tfoot"><span class="cb"></span><span class="tf-all">全选</span><span class="tf-sum">本页共 <b>30</b> 个Bug，未解决 <b>14</b>。</span><span class="tf-g">网络设置静态IP、网关等有效性校验失效</span><span>代码错误</span><span>BMC-Sprint52</span><span>激活</span><span>樊永顺</span><span>07-28 10:59</span><span>宋军</span>
                    <span class="pager">共 <b>975</b> 项<i class="pg-sp"></i>每页 <b>30</b> 项<i class="cr up"></i><u>|&lt;</u><u>&lt;</u><b>1/33</b><u class="wh">&gt;</u><u class="wh">&gt;|</u></span>
                  </div>
                </div>
                <span class="expander">›</span>
              </div>
              <footer class="zfoot">
                <span class="bc">禅道 &gt; 测试 &gt; 主板管理固件(S 版本) &gt; Bug</span>
                <span class="zf-r">Designed by 艾体验<svg><use href="#zlogo"/></svg><span class="zf-v">禅道企业版 4.1.3</span><span class="signout">签退</span></span>
              </footer>
            </div>
            <div class="vs"><i class="vs-thumb"></i><i class="vs-rod"></i></div>
          </div>
          <div class="rtask">
            <span class="rt-sys"><svg><use href="#win"/></svg></span>
            <span class="rt-sys"><svg><use href="#find"/></svg></span>
            <span class="rt-sys"><svg><use href="#task"/></svg></span>
            <div class="rt-apps">
              <span><svg><use href="#idesk"/></svg></span><span class="u"><svg><use href="#iqb"/></svg></span><span><svg><use href="#iboard"/></svg></span><span><svg><use href="#imon"/></svg></span><span class="u"><svg><use href="#icalc"/></svg></span><span class="u"><svg><use href="#ifox"/></svg></span><span class="u"><svg><use href="#ired"/></svg></span><span class="u"><svg><use href="#iw"/></svg></span><span class="u"><svg><use href="#icar"/></svg></span><span class="u"><svg><use href="#ifolder"/></svg></span><span class="u"><svg><use href="#ibug"/></svg></span><span class="u"><svg><use href="#ibook"/></svg></span><span class="u act-app"><svg><use href="#ichrome"/></svg></span><span class="u"><svg><use href="#ippl"/></svg></span><span class="u"><svg><use href="#iwx"/></svg></span><span class="u"><svg><use href="#ig"/></svg></span><span class="u"><svg><use href="#iclock"/></svg></span>
            </div>
            <div class="rt-tray">
              <svg viewBox="0 0 12 8"><path fill="none" stroke="#ddd" d="M1 7l5-6 5 6"/></svg>
              <svg viewBox="0 0 14 16"><ellipse cx="7" cy="9" rx="4" ry="6" fill="#111"/><ellipse cx="7" cy="11" rx="2.500" ry="3.500" fill="#eee"/><path fill="#e01890" d="M3 3h8v3H3z"/></svg>
              <svg viewBox="0 0 14 14"><path fill="none" stroke="#aab" d="M2 13C2 7 7 2 13 2M5 13c0-4 4-8 8-8M8 13c0-2 3-5 5-5"/></svg>
              <svg viewBox="0 0 10 16"><rect x="2" width="6" height="11" rx="3" fill="#eee"/><path stroke="#aaa" d="M5 11v4"/></svg>
              <svg viewBox="0 0 14 14"><path fill="none" stroke="#ddd" d="M1 3h12v8H1z"/><path fill="#eee" d="M2 4h6v6H2z"/></svg>
              <svg viewBox="0 0 14 14"><g fill="none" stroke="#bbb"><path d="M1 5h2l3-3v10L3 9H1zM8 4c1 2 1 4 0 6M11 2c2 3 2 7 0 10"/></g></svg>
              <span class="rt-a">A</span>
              <svg viewBox="0 0 14 14"><rect width="14" height="14" rx="3" fill="#e9572b"/><path fill="none" stroke="#fff" stroke-width="2" d="M10 4H5v3h4v3H4"/></svg>
            </div>
            <div class="rt-clock">16:55<br>2021/8/2</div>
            <svg class="rt-m" viewBox="0 0 18 16"><path fill="none" stroke="#eee" stroke-width="1.600" d="M1 15V1l4 9 4-9v14M13 2v13M16 2v13"/></svg>
            <svg class="rt-n" viewBox="0 0 14 14"><path fill="none" stroke="#ccd" d="M1 1h12v10H9l-2 2-2-2H1z"/></svg>
            <i class="rt-edge"></i>
          </div>
          <div class="watching"><svg viewBox="0 0 14 16"><path fill="#28b26a" d="M0 0h14v12H9v2h2v2H3v-2h2v-2H0z"/><path fill="#111" d="M7 3l3 3H8v3H6V6H4z"/></svg>你正在看吕家慧的共享</div>
        </div>
      </div>
    </div>
    <footer class="outerbar">
      <span class="ot-sys"><svg><use href="#win"/></svg></span>
      <span class="ot-sys"><svg><use href="#find"/></svg></span>
      <span class="ot-sys"><svg><use href="#task"/></svg></span>
      <div class="ot-apps"><span><svg><use href="#ichrome"/></svg></span><span><svg><use href="#ifolder"/></svg></span><span><svg><use href="#imickey"/></svg></span><span><svg><use href="#iclock"/></svg></span></div>
      <span class="ot-time">16:55</span>
    </footer>
    <div class="float-tool"><svg viewBox="0 0 14 12"><path stroke="#eee" d="M4 2h10M4 6h10M4 10h10M0 2h2M0 6h2M0 10h2"/></svg></div>
  </section>
</main>
</body>
</html>
```

FILE: styles.css
```css
*{box-sizing:border-box}
html,body{margin:0;height:100%;background:#000;overflow:hidden}
body{font-family:"Liberation Sans","Noto Sans CJK SC",sans-serif;font-size:12px;color:#000}
.sprite{display:none}
a{color:inherit;text-decoration:none}
i,em{font-style:normal}
button{font:inherit;border:0;background:none;padding:0;color:inherit}
p{margin:0}
hr{border:0;margin:0}
svg{display:block}
.screen{display:flex;width:3286px;height:1080px}

/* left monitor */
.mon-left{width:1920px;height:1080px;display:flex;flex-direction:column;position:relative}
.mail{flex:1;display:flex;flex-direction:column;min-height:0;background:#e2e7eb}
.titlebar{height:22px;background:linear-gradient(#6d99c7,#44709f);display:flex;align-items:center;padding-left:6px;color:#e9eff6;font-size:14px}
.doc-ic{width:11px;height:14px;margin-right:9px}
.winctl{margin-left:auto;display:flex;align-items:center}
.wc-min{width:13px;height:3px;background:#e3ecf5;margin:8px 14px 0 0}
.wc-res{width:12px;height:11px;margin-right:15px}
.wc-x{width:12px;height:11px;margin-right:6px}
.mailbar{height:40px;background:linear-gradient(#d9ebfc,#aec5df);border-bottom:2px solid #7a8b9d;display:flex;align-items:center;padding-left:11px;font-size:12.500px}
.mb{display:flex;align-items:center}
.mb svg{height:24px;width:24px;margin-right:7px}
.mb-save{margin-left:21px}
.mb-save svg{width:20px;margin-right:9px}
.mb-att{margin-left:24px}
.mb-att svg{width:23px;margin-right:7px}
.tri{width:0;height:0;border:4px solid transparent;border-top:6px solid #6d7d8d;border-bottom:0;margin-left:6px}
.mb-pic{margin-left:13px}
.mb-pic svg{width:22px;margin-right:10px}
.mb-crop{margin-left:17px}
.mb-crop svg{width:22px;margin-right:11px}
.account{margin-left:auto;display:flex;align-items:center;font-size:13.500px;padding-right:14px}
.acc-c{width:8px;height:6px;margin:0 0 0 6px}
.acc-l{width:15px;height:14px;margin-left:24px}
.fields{display:grid;grid-template-columns:84px 1fr;row-gap:8px;padding:12px 13px 0 0;grid-template-rows:26px 76px 26px 27px}
.flabel{display:flex;justify-content:flex-end;align-items:center;padding-right:15px;position:relative;font-size:12.500px}
.flabel:nth-of-type(2){align-items:flex-start;padding-top:5px}
.cc-tri{position:absolute;left:20px;top:8px;border:5px solid transparent;border-top:8px solid #7f93a8;border-bottom:0}
.fbox{background:#cde8cf;border:1px solid #b0b2b4;border-top-width:2px;border-bottom-width:2px;box-shadow:inset 0 -1px #fff;display:flex;align-items:center;padding-left:6px;font-size:12.500px}
.fb-to{align-items:flex-start;padding-top:4px}
.fb-cc{align-items:stretch;padding-right:0;justify-content:space-between}
.cc-text{padding-top:37px;font-size:12.500px;width:300px;white-space:nowrap}
.cc-scroll{width:15px;background:#fff;padding-top:13px;border-left:1px solid #ddd}
.cc-thumb{display:block;height:56px;background:linear-gradient(90deg,#fdfdfd,#d9dcdf);border:1px solid #b5b8bb}
.fb-bcc{border-color:#4a90e2;padding-right:0;justify-content:space-between}
.caret{display:inline-block;width:1px;height:17px;background:#000;vertical-align:-4px}
.plus{width:15px;height:100%;background:#fff;display:flex;align-items:center;justify-content:center}
.plus svg{width:14px;height:16px}
.fb-sub{font-size:13px;margin-right:-1px;margin-left:-1px;padding-left:7px}
.fmt{height:35px;margin-top:6px;border-top:1px solid #a9adb0;border-bottom:1px solid #a9adb0;display:flex;align-items:center;padding-left:75px}
.fi{width:30px;display:flex;justify-content:center;align-items:center;color:#55636f;font-weight:700;font-size:13px}
.fi svg{width:14px;height:14px}
.fs{width:6px;height:22px;position:relative;display:block}
.fs::after{content:"";position:absolute;left:2px;top:0;width:1px;height:22px;background:#c4c9cd}
.fsel{height:23px;background:#eef1f3;border:1px solid #fff;border-bottom:2px solid #b9bec2;display:flex;align-items:center;justify-content:space-between;padding:0 5px;font-size:14px;color:#111;white-space:nowrap}
.fsel svg{width:8px;height:6px}
.fsel-font{width:100px;margin-left:10px}
.fsel-size{width:50px;margin-left:2px}
.fa{width:10px;height:0;border:4px solid transparent;border-top:6px solid #7c8892;border-bottom:0}
.m1{margin-left:1px}.m2{margin-left:2px}.m3{margin-left:3px}.m5{margin-left:5px}
.mn1{margin-left:-1px}.mn4{margin-left:-4px}
.fa-a{color:#333;box-shadow:inset 0 -3px #000;height:16px;width:11px;margin:0 10px;line-height:13px}
.fa-ab{width:14px;margin:0 8px;height:16px;background:linear-gradient(#4f86c6 12px,#000 12px);color:#fff;font-size:9px;font-weight:400;align-items:flex-start;line-height:12px}
.ft-i{font-style:italic;font-weight:400;font-family:"Liberation Serif",serif}
.ft-u{text-decoration:underline;font-weight:400}
.ft-s{text-decoration:line-through;font-weight:400}
.compose{flex:1;min-height:0;display:flex;background:#cde8cf;font-size:14px}
.compose-main{flex:1;min-width:0;position:relative;overflow:hidden}
.cm-plus{margin:11px 0 0 10px;line-height:16px}
.cm-hr1{width:210px;height:1px;background:#b5c4df;margin:31px 0 0 10px}
.cm-sig{margin:10px 0 0 20px;line-height:17px;color:#7d7d7d;font-size:13px}
.cm-hr2{width:796px;height:1px;background:#9b9b9b;margin:6px 0 0 20px}
.cm-hr3{height:1px;background:#b5c4df;margin:106px 12px 0 0}
.cm-quote{height:88px;margin:4px 12px 0 0;background:#eee;padding:46px 0 0 420px;font-size:12.500px;line-height:17px;color:#000}
.cm-quote a{color:#00e;text-decoration:underline}
.cm-l1{margin:2px 0 0 420px;line-height:18px;font-size:15px}
.cm-l2{margin:86px 0 0 420px;line-height:18px}
.cm-l3{margin:3px 0 0 420px;line-height:18px}
.cm-l4{margin:67px 0 0 420px;line-height:18px}
.compose-scroll{width:15px;background:#fff;padding:607px 0 0 6px;border-left:1px solid #e4e4e4}
.thumb-map{width:10px;height:60px;background:#8a8f97;border-radius:3px 0 0 3px;padding:7px 2px;display:flex;flex-direction:column;gap:2.300px}
.tk{height:2px;display:block}
.tk.a{background:#666}.tk.b{background:#e2a570}.tk.c{background:#e8df70}.tk.d{background:#9fe08a}.tk.e{background:#70e0d8}
.startmenu{position:absolute;left:0;top:409px;width:420px;height:640px;background:#fff}
.avatar{position:absolute;left:18px;top:18px;width:33px;height:33px}
.power{position:absolute;left:290px;top:600px;width:101px;height:28px;display:flex;background:#444a40;border:1px solid #7b7b7b;color:#fff;font-size:13px}
.power-l{flex:1;padding-left:20px;line-height:26px}
.power-r{width:23px;border-left:1px solid #7b7b7b;display:flex;align-items:center;justify-content:center}
.power-r svg{width:7px;height:14px}
.taskbar{height:31px;background:linear-gradient(90deg,#1f1f1f 0,#222 42%,#3e3e42 48%,#4a3a36 58%,#4a3d34 85%,#484848 100%);display:flex;align-items:center;padding-left:10px}
.tb-sys{width:36px}
.tb-sys svg{width:16px;height:16px}
.tb-apps{display:flex;margin-left:-3px;gap:9px;align-self:stretch}
.app{width:28px;display:flex;justify-content:center;padding-top:7px;border-bottom:2px solid #6fb0e0;margin-bottom:1px}
.app svg{width:16px;height:16px}
.tray{margin-left:auto;display:flex;align-items:center;color:#ddd;height:100%}
.tr-desk{font-size:12.500px;margin-right:7px}
.tr-more{font-size:14px;margin:-8px 12px 0 0;color:#eee}
.tr-up{width:12px;height:8px;margin-right:10px}
.tr-i{width:16px;height:16px;margin-right:8px}
.tr-a{font:700 15px "Liberation Serif",serif;color:#eee;margin:0 15px 0 3px}
.tr-du{width:16px;height:16px;background:#0a9bf0;border-radius:2px;color:#fff;font-size:11px;line-height:16px;text-align:center;margin-right:15px}
.tr-time{font-size:13px;color:#eee;margin-right:20px}
.tr-note{width:15px;height:17px;margin-right:20px}
.tr-edge{width:1px;height:100%;background:#222;margin-right:4px}

/* right monitor */
.mon-right{width:1366px;height:1080px;position:relative;padding-top:158px;background:#000}
.conf{background:#2d2a29;height:737px;display:flex;flex-direction:column;border-left:1px solid #48484c}
.conf-head{height:52px;background:#232327;border-bottom:1px solid #46464a;display:flex;align-items:center;padding-left:20px;flex:none}
.layout-btn{width:103px;height:27px;margin-top:-13px;background:#38393c;border:1px solid #55565a;border-radius:3px;color:#ececec;font-size:12px;display:flex;align-items:center;padding-left:8px}
.layout-btn svg{width:13px;height:13px;margin-right:6px}
.layout-btn .lb-c{width:10px;height:6px;margin:0 0 0 10px}
.conf-ctl{margin-left:auto;display:flex;align-items:center;padding-right:13px;gap:16px;margin-top:-12px}
.conf-ctl svg{width:16px;height:16px}
.cc-sep{width:1px;height:16px;background:#444;margin:0 0 0 -1px}
.stage{flex:1;min-height:0;padding-left:73px}
.remote{width:1217px;height:685px;background:#eee;display:flex;flex-direction:column;position:relative;filter:blur(.45px);font-size:10.500px;color:#666}
.tabs{height:28px;background:#d6d9dc;display:flex;align-items:center;padding-left:7px;flex:none;font-size:9.500px}
.tab{width:126px;height:28px;display:flex;align-items:center;padding:0 8px 0 9px;border-right:1px solid #aaa;background-clip:content-box;position:relative;color:#666;white-space:nowrap;flex:none}
.fav{width:12px;height:12px;margin-right:7px;flex:none}
.tab-t{flex:1;white-space:nowrap}
.tab b{font-weight:700;color:#333;font-size:13px}
.tab-gap{width:252px;flex:none}
.tab-bmc{border-right:0;padding-left:13px;width:123px}
.tab-bmc .fav,.tab-on .fav{margin-right:1px}
.tab-on{width:125px;border:0;background:#eeeff1;border-radius:6px 6px 0 0;padding-left:10px;color:#555}
.tab-plus{font-size:18px;color:#333;margin-left:12px}
.tab-dl{width:12px;height:12px;margin-left:50px}
.tab-win{margin-left:auto;display:flex;align-items:center;margin-right:14px;gap:28px}
.tab-win svg{width:10px;height:10px}
.tw-min{width:9px;height:1px;background:#444}
.sharebar{position:absolute;left:462px;top:0;width:292px;height:31px;background:#2b2b2b;border-radius:0 0 0 3px;display:flex;align-items:center;color:#b9b9b9;font-size:8.800px;padding-left:10px}
.sb-i{width:12px;height:14px;margin-right:5px;flex:none}
.sb-mic{margin-right:10px}
.sb-t{white-space:nowrap;margin-right:11px}
.sb-lock{color:#c8912c}
.sb-end{margin-left:auto;width:44px;height:31px;background:#d85a5c;color:#f3d2d2;display:flex;align-items:center;justify-content:center;white-space:nowrap;font-size:8.800px}
.addr{height:29px;background:#eff0f2;display:flex;align-items:center;padding-left:11px;flex:none}
.ad-b{width:12px;height:12px}
.ad-f{margin-left:13px}
.ad-r{margin-left:14px}
.omni{margin-left:12px;width:1069px;height:23px;background:#e3e5e8;border-radius:12px;display:flex;align-items:center;padding:0 7px 0 8px;color:#555}
.warn{width:12px;height:12px;margin-right:6px}
.insec{font-size:11px}
.om-sep{width:1px;height:13px;background:#999;margin:0 8px 0 6px}
.url{font-size:12.300px;color:#7a7a7a;white-space:nowrap}
.url b{font-weight:400;color:#333}
.star{width:12px;height:12px;margin-left:auto}
.prof{width:18px;height:18px;margin-left:10px}
.dots{width:4px;height:14px;margin-left:14px}
.appwrap{flex:1;min-height:0;display:flex}
.app-main{width:1210px;display:flex;flex-direction:column}
.zh{height:40px;background:linear-gradient(90deg,#1e88ea,#1a6fdc 55%,#1650c8);display:flex;align-items:center;padding-left:32px;color:#dce9fa;flex:none;border-top:1px solid #4f9aec;border-bottom:1px solid #8fb8ee}
.zh-title{font-size:16px;width:127px;white-space:nowrap;color:#f2f6fc}
.zh-badge{margin-left:8px;width:45px;height:14px;background:#5ea2ee;color:#d4e4f8;font-size:10.500px;line-height:14px;text-align:center;border-radius:2px;white-space:nowrap}
.zh-nav{display:flex;align-items:center;margin-left:127px;height:100%}
.zh-nav a{padding:0 7.800px;height:100%;display:flex;align-items:center;white-space:nowrap}
.zh-nav a.on{background:#1a65c5;font-weight:700;color:#fff}
.zh-nav i{width:1px;height:15px;background:#7fb2ee;margin:0 8px 0 8.500px}
.zh-search{margin-left:auto;width:120px;height:19px;background:rgba(255,255,255,.1);display:flex;justify-content:flex-end}
.zh-search span{width:24px;background:#5e92ee;text-align:center;line-height:19px;color:#dce9fa}
.zh-user{font-size:12.500px;margin:0 36px 0 14px;white-space:nowrap;display:flex;align-items:center}
.zh-user i{width:0;border:3px solid transparent;border-top:4px solid #b8cff2;border-bottom:0;margin-left:3px}
.sub{height:40px;background:#f0f0f2;display:flex;align-items:center;padding-left:32px;flex:none;font-size:11.500px;color:#666}
.crumb{width:59px;height:26px;position:relative;line-height:26px;padding-left:6px;font-size:10.500px;color:#555}
.crumb svg,.prod svg{position:absolute;inset:0;width:100%;height:100%}
.prod{width:187px;height:26px;margin-left:3px;position:relative;display:flex;align-items:center;padding-left:11px;color:#2b6cd8;font-size:10.500px;white-space:nowrap}
.p2nd{margin-left:11px}
.cr{display:inline-block;width:0;height:0;border:3px solid transparent;border-top:4px solid #8fb3e6;border-bottom:0;margin-left:4px;vertical-align:2px}
.cr.g{border-top-color:#aaa}
.cr.up{border-top:0;border-bottom:4px solid #ddd;margin:0 11px 0 7px}
.sub-nav{display:flex;gap:19px;margin-left:195px;align-items:center}
.sub-nav a.on{color:#2b6cd8;font-weight:700}
.work{flex:1;min-height:0;background:linear-gradient(#dadadc,#ececee 80px);padding:8px 32.500px 0 32px;position:relative}
.filter{height:27px;display:flex;align-items:center;font-size:10.500px;color:#666;white-space:nowrap}
.allmod{width:146px;height:27px;background:#ececee;border-left:3px solid #2b6cd8;border-radius:2px;text-align:center;line-height:27px;color:#2b6cd8;font-weight:700;font-size:11.500px;clip-path:polygon(0 0,95% 0,100% 50%,95% 100%,0 100%);padding-right:8px}
.fl-on{margin-left:18px;color:#2b6cd8;font-size:11.500px;height:27px;line-height:27px;border-bottom:2px solid #2b6cd8}
.fl-count{margin-left:4px;width:23px;height:16px;border-radius:8px;background:#cfcfd1;text-align:center;line-height:16px;font-size:10px;color:#777}
.fl-list{display:flex;gap:13.700px;margin-left:14px;align-items:center}
.fl-search{display:flex;align-items:center;margin-left:-3px}
.fl-search svg{width:12px;height:12px;margin-right:3px}
.fl-right{margin-left:auto;display:flex;align-items:center}
.fl-right a{display:flex;align-items:center}
.fl-right svg{width:14px;height:14px;margin-right:3px}
.fl-exp{margin-left:13px}
.fl-imp{margin-left:14px}
.btn{height:26px;display:flex;align-items:center;color:#d8effc;padding-left:12px;font-size:11px;border-radius:2px}
.btn b{font-size:16px;font-weight:400;margin-right:1px;color:#fff}
.btn-a{width:85px;margin-left:8px;background:#22a6ea}
.btn-b{width:63px;margin-left:2px;background:#1a6fe0}
.tbl{margin-top:7px}
.row{display:grid;grid-template-columns:35px 42.600px 38.400px 41px 39px 219px 72px 94px 64px 63px 88.500px 78.500px 79px 82px 110px;align-items:center;height:27.500px;background:#f0f0f2;white-space:nowrap;color:#666}
.row.alt{background:#e3e3e5}
.row.hov{background:#d8e2ec}
.row.head{height:28px;background:#f0f0f2;color:#444;border-bottom:1px solid #dcdcdc;font-size:11px}
.row.head>span{display:flex;align-items:center}
.cb{width:14px;height:14px;margin-left:12px;border:1px solid #c6c6c8;background:#f4f4f6;border-radius:2px;display:block}
.s{width:8px;height:12px;margin-left:4px;color:#a8a8aa}
.hd-on{color:#111;font-weight:700}
.hd-on .s{color:#222}
.hd-op{justify-content:space-between;padding:0 7px 0 44px}
.hd-op svg{width:12px;height:12px}
.id{color:#3f5cb8}
.fl{width:16px;height:19px}
.fl text{font-size:9px;font-weight:700;text-anchor:middle;fill:currentColor;font-family:"Liberation Sans",sans-serif}
.fl.o{color:#ee8a3c}.fl.r{color:#e86a2c}.fl.y{color:#eec85a}.fl.g{color:#a8cc50}
.pri{width:16px;height:16px;border:1px solid #2e93e2;border-radius:50%;text-align:center;line-height:14px;color:#2e93e2;position:relative}
.pri.po{border-color:#ee9a28;color:#ee9a28}
.hand{position:absolute;left:8px;top:6px;width:13px;height:18px}
.yes{color:#1d8a2a;padding-left:8px}
.no{color:#888;padding-left:8px}
.ttl{color:#2f5cc8;display:flex;align-items:center;white-space:nowrap}
.tag{width:116px;height:16px;border:1px solid #999;border-radius:8px;line-height:14px;padding-left:4px;color:#777;margin-right:3px;flex:none;font-size:9.600px;white-space:nowrap}
.act{color:#8a5cb8}
.cls{color:#888}
.done{color:#3ca83c}
.asg{color:#3c6ee0}
.cld{color:#aaa}
.ops{display:flex;gap:6.300px;color:#2e9be8}
.ops svg{width:14px;height:14px}
.ops .off{color:#c4c4c6}
.tfoot{height:31px;background:#5f5f60;color:#4f4f50;border-top:1px solid #8a8a8a;border-radius:0 0 0 3px}
.tfoot .cb{background:none;border:1px solid #ddd}
.tf-all{color:#eee}
.tf-sum{color:#eee;grid-column:3/6;font-size:10.500px}
.tf-sum b{font-weight:700}
.tf-g{padding-left:21px}
.pager{grid-column:13/16;display:flex;align-items:center;justify-content:flex-end;color:#eee;padding-right:8px;font-size:11px}
.pager b{margin:0 3px}
.pg-sp{width:8px}
.pager u{text-decoration:none;margin:0 9px;color:#b8b8b8;font-weight:700}
.pager u.wh{color:#eee}
.expander{position:absolute;left:19px;top:256px;width:9px;height:23px;background:#6fc0ec;border-radius:3px;color:#fff;font-size:12px;line-height:22px;text-align:center}
.zfoot{height:31px;background:#ebebed;display:flex;align-items:center;padding:0 8px 0 32px;color:#999;font-size:11.500px;flex:none;white-space:nowrap}
.zf-r{margin-left:auto;display:flex;align-items:center;font-size:10.500px;color:#aaa}
.zf-r svg{width:14px;height:14px;margin:0 1px 0 8px}
.zf-v{color:#888;font-size:11.500px}
.signout{width:34px;height:20px;background:#ef5b60;color:#f8dcdc;border-radius:2px;text-align:center;line-height:20px;margin-left:8px}
.vs{width:7px;background:#ebebed;display:flex;flex-direction:column;align-items:center;flex:none}
.vs-thumb{width:7px;height:344px;background:#b2b2b4;display:block}
.vs-rod{width:5px;height:44px;margin-top:203px;background:linear-gradient(#56646f,#b06a30 80%,#c46a20);border-radius:3px;display:block}
.rtask{height:31px;background:linear-gradient(90deg,#2c3e4c,#263648 60%,#25344c);display:flex;align-items:center;flex:none;position:relative;color:#eee}
.rt-sys{width:40px;padding-left:8px;flex:none}
.rt-sys svg{width:16px;height:16px}
.rt-apps{display:flex;align-self:stretch;gap:6.200px;margin-left:-1px}
.rt-apps span{width:33px;display:flex;justify-content:center;padding-top:7px}
.rt-apps span.u{border-bottom:1px solid #6f9fc8}
.rt-apps span.act-app{background:#43566a}
.rt-apps svg{width:18px;height:18px}
.rt-tray{display:flex;align-items:center;margin-left:142px;gap:6.500px}
.rt-tray svg{width:13px;height:14px}
.rt-a{font:400 15px "Liberation Sans",sans-serif;width:13px;text-align:center}
.rt-clock{font-size:11px;line-height:15px;text-align:center;margin-left:13.500px;width:48px;white-space:nowrap}
.rt-m{width:18px;height:16px;margin-left:16px}
.rt-n{width:14px;height:14px;margin-left:19px}
.rt-edge{width:1px;height:100%;background:#4a78b0;margin-left:auto;margin-right:3px}
.watching{position:absolute;left:-74px;bottom:0;width:155px;height:27px;background:rgba(15,15,15,.93);border-radius:0 3px 0 0;display:flex;align-items:center;color:#f2f2f2;font-size:12px;padding-left:10px;white-space:nowrap}
.watching svg{width:12px;height:14px;margin-right:5px;flex:none}
.outerbar{height:30px;background:linear-gradient(90deg,#1d1d1d,#2a2826 28%,#4a3a34 50%,#453a33 62%,#3a3e3a 85%,#333 100%);display:flex;align-items:center;padding-left:10px;border-top:1px solid #484848;color:#eee}
.ot-sys{width:36px}
.ot-sys svg{width:16px;height:16px}
.ot-apps{display:flex;align-self:stretch;gap:9px;margin-left:-3px}
.ot-apps span{width:28px;display:flex;justify-content:center;padding-top:6px;border-bottom:2px solid #6fb0e0}
.ot-apps svg{width:16px;height:16px}
.ot-time{margin-left:auto;margin-right:8px;font-size:13px}
.float-tool{position:absolute;right:0;top:536px;width:25px;height:30px;background:#111;border-radius:3px 0 0 3px;display:flex;align-items:center;justify-content:center}
.float-tool svg{width:14px;height:12px}
```
